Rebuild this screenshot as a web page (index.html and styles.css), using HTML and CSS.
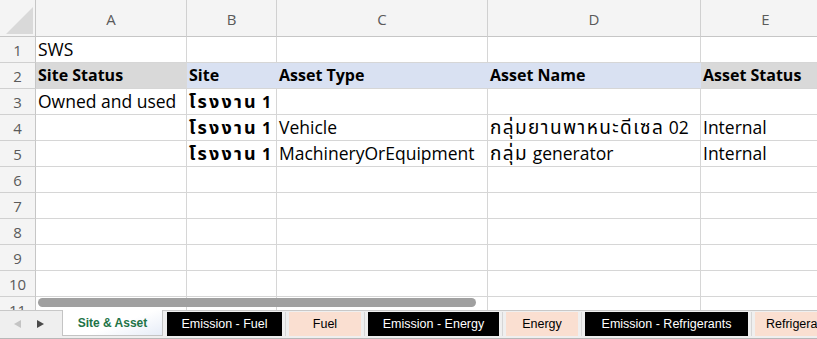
FILE: index.html
```html
<!DOCTYPE html>
<html>
<head>
<meta charset="utf-8">
<link rel="stylesheet" href="styles.css">
</head>
<body>
<div class="sheet">
  <div class="gridwrap">
    <div class="grid">
      <div class="corner"><span class="tri"></span></div>
      <div class="colh">A</div>
      <div class="colh">B</div>
      <div class="colh">C</div>
      <div class="colh">D</div>
      <div class="colh">E</div>

      <div class="rowh">1</div>
      <div class="cell">SWS</div>
      <div class="cell"></div>
      <div class="cell"></div>
      <div class="cell"></div>
      <div class="cell"></div>

      <div class="rowh">2</div>
      <div class="cell hd gray">Site Status</div>
      <div class="cell hd blue">Site</div>
      <div class="cell hd blue">Asset Type</div>
      <div class="cell hd blue">Asset Name</div>
      <div class="cell hd gray">Asset Status</div>

      <div class="rowh">3</div>
      <div class="cell">Owned and used</div>
      <div class="cell b"><span class="th">โรงงาน</span>&nbsp;1</div>
      <div class="cell"></div>
      <div class="cell"></div>
      <div class="cell"></div>

      <div class="rowh">4</div>
      <div class="cell"></div>
      <div class="cell b"><span class="th">โรงงาน</span>&nbsp;1</div>
      <div class="cell">Vehicle</div>
      <div class="cell"><span class="th">กลุ่มยานพาหนะดีเซล</span>&nbsp;02</div>
      <div class="cell">Internal</div>

      <div class="rowh">5</div>
      <div class="cell"></div>
      <div class="cell b"><span class="th">โรงงาน</span>&nbsp;1</div>
      <div class="cell">MachineryOrEquipment</div>
      <div class="cell"><span class="th">กลุ่ม</span>&nbsp;generator</div>
      <div class="cell">Internal</div>

      <div class="rowh">6</div>
      <div class="cell"></div><div class="cell"></div><div class="cell"></div><div class="cell"></div><div class="cell"></div>
      <div class="rowh">7</div>
      <div class="cell"></div><div class="cell"></div><div class="cell"></div><div class="cell"></div><div class="cell"></div>
      <div class="rowh">8</div>
      <div class="cell"></div><div class="cell"></div><div class="cell"></div><div class="cell"></div><div class="cell"></div>
      <div class="rowh">9</div>
      <div class="cell"></div><div class="cell"></div><div class="cell"></div><div class="cell"></div><div class="cell"></div>
      <div class="rowh">10</div>
      <div class="cell"></div><div class="cell"></div><div class="cell"></div><div class="cell"></div><div class="cell"></div>
      <div class="rowh">11</div>
      <div class="cell"></div><div class="cell"></div><div class="cell"></div><div class="cell"></div><div class="cell"></div>
    </div>
    <div class="hscroll"></div>
  </div>
  <div class="tabbar">
    <div class="navs">
      <span class="arrow left"></span>
      <span class="arrow right"></span>
    </div>
    <div class="tab active">Site &amp; Asset</div>
    <span class="sep first"></span>
    <div class="tab dark w115">Emission - Fuel</div>
    <span class="sep"></span>
    <div class="tab peach w72">Fuel</div>
    <span class="sep"></span>
    <div class="tab dark w131">Emission - Energy</div>
    <span class="sep"></span>
    <div class="tab peach w72">Energy</div>
    <span class="sep"></span>
    <div class="tab dark w163">Emission - Refrigerants</div>
    <span class="sep"></span>
    <div class="tab peach last">Refrigera</div>
  </div>
</div>
</body>
</html>
```
FILE: styles.css
```css
* { box-sizing: border-box; }
html, body { margin: 0; padding: 0; background: #fff; }
body { width: 817px; height: 339px; overflow: hidden; }

.sheet {
  width: 817px;
  height: 339px;
  overflow: hidden;
  display: flex;
  flex-direction: column;
}

.gridwrap {
  position: relative;
  height: 310px;
  overflow: hidden;
  flex: none;
}

.grid {
  display: grid;
  grid-template-columns: 36px 151px 90px 211px 213px 130px;
  grid-template-rows: 37px repeat(11, 26px);
  width: 831px;
  font-family: "Open Sans", "Noto Sans", "Noto Sans Thai", sans-serif;
  font-size: 17.5px;
  color: #000;
}

.corner {
  background: #f4f4f4;
  border-right: 1px solid #c6c6c6;
  border-bottom: 1px solid #c6c6c6;
  position: relative;
}
.corner .tri {
  position: absolute;
  right: 2px;
  bottom: 2px;
  width: 27px;
  height: 27px;
  background: #d9d9d9;
  clip-path: polygon(100% 0, 100% 100%, 0 100%);
}

.colh {
  background: #f4f4f4;
  border-right: 1px solid #d0d0d0;
  border-bottom: 1px solid #c6c6c6;
  display: flex;
  align-items: center;
  justify-content: center;
  color: #5a5a5a;
  font-size: 15px;
  padding-top: 1px;
}

.rowh {
  background: #f4f4f4;
  border-right: 1px solid #c6c6c6;
  border-bottom: 1px solid #d0d0d0;
  display: flex;
  align-items: flex-end;
  justify-content: center;
  color: #5a5a5a;
  font-size: 15px;
  line-height: 22px;
  padding-bottom: 1px;
}

.cell {
  border-right: 1px solid #d6d6d6;
  border-bottom: 1px solid #d6d6d6;
  padding: 0 0 0 2px;
  display: flex;
  align-items: baseline;
  white-space: nowrap;
  line-height: 24px;
}
.cell.b { font-weight: 700; font-size: 16px; }
.cell.hd { font-weight: 700; font-size: 16px; border-right: none; }
.cell.gray { background: #d9d9d9; }
.cell.blue { background: #d9e1f2; }
.th { font-size: 19px; letter-spacing: 1.4px; }
.cell.b .th { font-size: 18px; letter-spacing: 2.2px; }

.hscroll {
  position: absolute;
  left: 38px;
  top: 298px;
  width: 438px;
  height: 9px;
  border-radius: 5px;
  background: #a0a0a0;
}

.tabbar {
  flex: none;
  height: 29px;
  background: #efefef;
  border-top: 1px solid #c8c8c8;
  border-bottom: 1px solid #b8b8b8;
  display: flex;
  align-items: stretch;
  padding-top: 1px;
  padding-bottom: 2px;
  font-family: "Liberation Sans", Arial, sans-serif;
  font-size: 12.5px;
}

.navs {
  flex: none;
  width: 62px;
  display: flex;
  align-items: center;
  padding-left: 14px;
  gap: 16px;
}
.arrow {
  width: 0;
  height: 0;
  border-top: 4px solid transparent;
  border-bottom: 4px solid transparent;
}
.arrow.left { border-right: 7px solid #c4c4c4; }
.arrow.right { border-left: 7px solid #4a4a4a; }

.tab {
  display: flex;
  align-items: center;
  justify-content: center;
  white-space: nowrap;
  flex: none;
  overflow: hidden;
}
.tab.active {
  width: 101px;
  margin-top: -2px;
  background: linear-gradient(160deg, #ffffff 55%, #e6ecf7 100%);
  border: 1px solid #c4c4c4;
  border-top: none;
  color: #217346;
  font-weight: 700;
  font-size: 12px;
}
.tab.dark { background: #000; color: #fff; }
.tab.peach { background: #fadfd1; color: #000; }
.tab.w115 { width: 115px; }
.tab.w72 { width: 72px; }
.tab.w131 { width: 131px; }
.tab.w163 { width: 163px; }
.tab.last { width: 62px; justify-content: flex-start; padding-left: 11px; }

.sep {
  flex: none;
  width: 7px;
  display: flex;
  justify-content: center;
}
.sep.first { width: 4px; }
.sep.first::after { display: none; }
.sep::after {
  content: "";
  width: 1px;
  background: #d6d6d6;
}
```
